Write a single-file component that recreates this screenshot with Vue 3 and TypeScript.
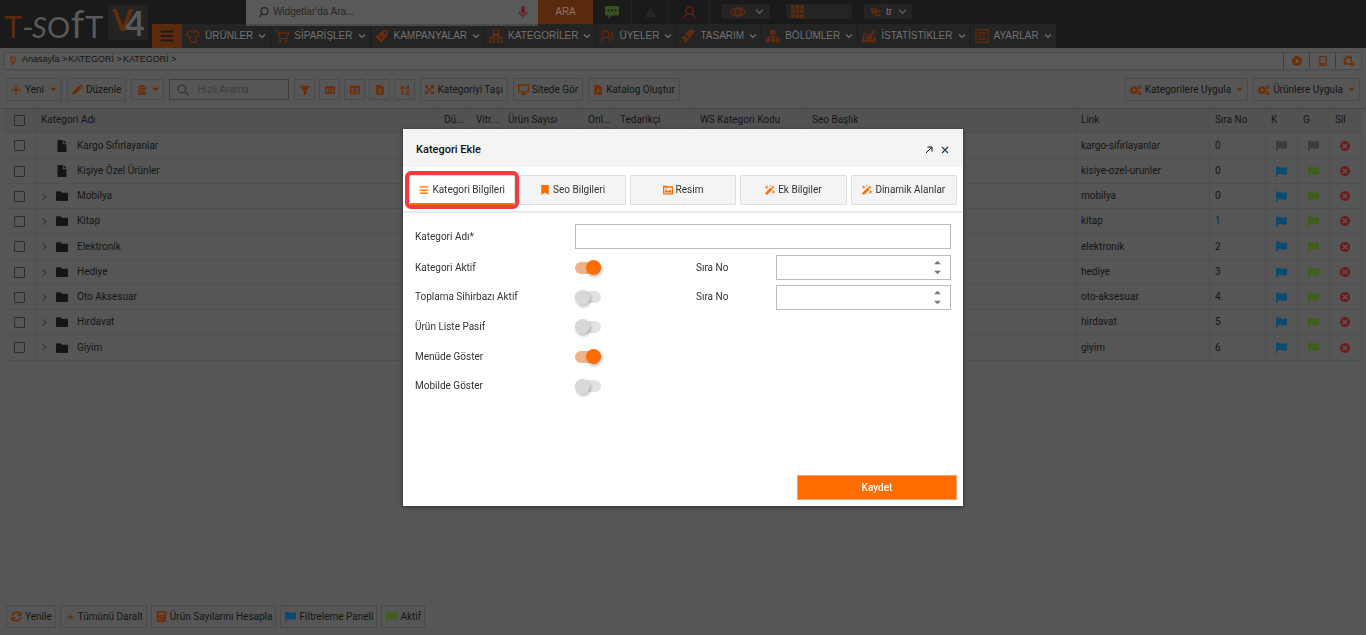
<script setup lang="ts">
import { ref, h, type FunctionalComponent } from 'vue'

interface IconDef { box: number; body: string }

const solid = (d: string, box = 16): IconDef => ({ box, body: `<path fill="currentColor" fill-rule="evenodd" d="${d}"/>` })
const line = (d: string, w = 1.5, box = 16): IconDef => ({ box, body: `<path fill="none" stroke="currentColor" stroke-width="${w}" d="${d}"/>` })

const icons: Record<string, IconDef> = {
  menu: solid('M1 2h14v2H1zM1 7h14v2H1zM1 12h14v2H1z'),
  chevron: line('M2 5l6 6 6-6', 2.4),
  right: line('M4 1l7 7-7 7', 2.4),
  caret: solid('M0 4h16l-8 8z'),
  caretUp: solid('M0 12h16L8 4z'),
  spinUp: solid('M2 11h12L8 5z'),
  spinDown: solid('M2 5h12l-6 6z'),
  search: line('M10.5 10.5L15 15M11.5 6.5a5 5 0 1 1-10 0a5 5 0 1 1 10 0z', 1.6),
  searchLeft: line('M6 10L1.5 14.5M14.5 6a5 5 0 1 1-10 0a5 5 0 1 1 10 0z', 1.8),
  mic: { box: 16, body: '<rect x="5.5" y="0" width="5" height="10" rx="2.5" fill="currentColor"/><path d="M3 7c0 7 10 7 10 0M8 12v4" fill="none" stroke="currentColor" stroke-width="1.5"/>' },
  chat: solid('M0 1h16v11H8l-4 4v-4H0zM3 5v2h2V5zM7 5v2h2V5zM11 5v2h2V5z'),
  warn: solid('M8 1l8 14H0zM7 6v4h2V6zM7 11v2h2v-2z'),
  user: line('M12.2 5.5a4.2 4.7 0 1 1-8.4 0a4.2 4.7 0 1 1 8.4 0zM5.5 9.5C2 11 1.5 13 1.5 15.5M10.5 9.5C14 11 14.500 13 14.500 15.500', 1.6),
  users: line('M10 6a3.700 4.200 0 1 1-7.400 0a3.700 4.200 0 1 1 7.400 0zM4.500 9.500C1.500 10.500 1 12 1 14.500M8.500 9.500c3 1 3.500 2.500 3.500 5M11 3.500c4-1 4.500 4 2 5.500c1.500.5 2 1.500 2 3', 1.3),
  eye: { box: 16, body: '<path d="M.5 8C4 2.500 12 2.500 15.500 8C12 13.500 4 13.500.5 8z" fill="none" stroke="currentColor" stroke-width="1.500"/><circle cx="8" cy="8" r="3.300" fill="none" stroke="currentColor" stroke-width="2"/><circle cx="8" cy="8" r="1" fill="currentColor"/>' },
  grid: solid('M0 0h4.600v4.600H0zM5.700 0h4.600v4.600H5.700zM11.400 0H16v4.600h-4.600zM0 5.700h4.600v4.600H0zM5.700 5.700h4.600v4.600H5.700zM11.400 5.700H16v4.600h-4.600zM0 11.400h4.600V16H0zM5.700 11.400h4.600V16H5.700zM11.400 11.400H16V16h-4.600z'),
  lang: solid('M0 1h9v4h6v10H7v-4H2L0 9zM3 3v2h3V3zM9 8v4h4V8z'),
  shirt: line('M5 2L1 5.500l1.500 3.500L5 8v7h6V8l2.500 1L15 5.500 11 2C10 4 6 4 5 2z', 1.3),
  cart: { box: 16, body: '<path d="M0 2h3l2.500 9h8L15.500 4.500H4" fill="none" stroke="currentColor" stroke-width="1.400"/><circle cx="6" cy="14" r="1.500" fill="currentColor"/><circle cx="13" cy="14" r="1.500" fill="currentColor"/>' },
  tag: solid('M8 2l6-1 1 6-8 8.500L0 9zM11.500 3a1.300 1.300 0 1 0 .1 0zM5 8l3 3 .8-.8-3-3z'),
  boxes: line('M5 1h6v5H5zM1 10h5v5H1zM10 10h5v5h-5zM8 6v2M3.500 10V8h9v2', 1.5),
  brush: solid('M6 4l6-4 4 2-4 6-2 2-5 6-2-4-3-3 5-1zM7 6l-2 3 2 1 2-2z'),
  tree: solid('M5 1h6v5H8.800v2.500H14V11h2v4h-4.500v-4h1V10H8.800v1h1.400v4H5.800v-4h1.400v-1H3.500v1h1v4H0v-4h2V8.500h5.200V6H5z'),
  chart: solid('M1 5h8v1.500H2.500V12h11V7H15v5h1v3H0v-3h1zM4 11V8l2 1 3-2 3-4-1.500-1L15 1v4l-1.500-1-2 3v4z'),
  settings: line('M1 1h14v14H1zM3 4.500h10M3 8h10M3 11.500h10M10 3v3M6 6.500v3M10 10v3', 1.3),
  pin: solid('M8 0a5.500 5.500 0 0 1 5 7.500L8 16 3 7.500A5.500 5.500 0 0 1 8 0zM8 3a2.500 2.500 0 1 0 .1 0z'),
  play: solid('M8 0a8 8 0 1 0 .1 0zM6 4l6 4-6 4z'),
  receipt: solid('M2 0h12v16H2zM4 2v9h8V2zM9 12.500h2v1.500H9z'),
  addGlobe: line('M11 9V3H5L2 6v6h6M5 1v4M10 1v4M1 6h4M1 10h4M12 8v8M8 12h8', 1.8),
  plus: solid('M6.800 1h2.400v5.800H15v2.400H9.200V15H6.800V9.200H1V6.800h5.800z'),
  pencil: solid('M1 11.500L10 2.500l3.500 3.500L4.500 15H1zM11 1.500l1.500-1.500L16 3.500 14.500 5z'),
  trash: solid('M1 1.500h4L6 0h4l1 1.500h4V3H1zM2 4h12v12H2zM4 6v8h1.200V6zM7.400 6v8h1.200V6zM10.800 6v8H12V6z'),
  filter: solid('M0 1h16v1.500L10 9v7H6V9L0 2.500z'),
  abc: solid('M0 2h16v12H0zM2 5v6h1V9h1v2h1V5zM3 6h1v2H3zM7 5v6h2V8H8V7h1V5zM11 5v6h3V9.500h-1.500v-3H14V5z'),
  table: solid('M0 1h16v14H0zM2 5v2h5V5zM9 5v2h5V5zM2 8.500v2h5v-2zM9 8.500v2h5v-2zM2 12v1.500h5V12zM9 12v1.500h5V12z'),
  excel: solid('M2 0h8l4 4v12H2zM5 6l2 3.500L5 13h2l1-2 1 2h2L9 9.500 11 6H9L8 8 7 6z'),
  sort: { box: 16, body: '<path d="M4 15V3M1 6l3-4 3 4M10 7l2.500-6L15 7M11 5h3M10 10h4.500L10 15h5" fill="none" stroke="currentColor" stroke-width="1.800"/>' },
  move: line('M1 1l14 14M15 1L1 15M1 6V1h5M10 1h5v5M15 10v5h-5M6 15H1v-5', 2.2),
  monitor: line('M1 1.500h14v10H1zM8 11v4M4.500 14.500h7', 2),
  pdf: solid('M2 0h8l4 4v12H2zM7.500 5c.5 4-1.500 5-3.500 8l1 .5C6.500 11 9 10 12 11v-1.500C9.500 9.500 9 7 8.800 5z'),
  gears: { box: 16, body: '<circle cx="5.500" cy="8" r="3.300" fill="none" stroke="currentColor" stroke-width="2.600"/><circle cx="5.500" cy="8" r="5" fill="none" stroke="currentColor" stroke-width="1.600" stroke-dasharray="2 1.930"/><circle cx="13" cy="4" r="1.700" fill="none" stroke="currentColor" stroke-width="1.600"/><circle cx="13" cy="12" r="1.700" fill="none" stroke="currentColor" stroke-width="1.600"/>' },
  file: solid('M2 0h7v5.500h5V16H2zM10.200 0L14 4.200h-3.800z'),
  folder: solid('M0 3a1.500 1.500 0 0 1 1.500-1.500H6L8 3.500h6.500A1.500 1.500 0 0 1 16 5v8a1.500 1.500 0 0 1-1.500 1.500h-13A1.500 1.500 0 0 1 0 13z'),
  flag: solid('M0 0h2v2C5 .5 7 3 10 2.500c2 0 4-.5 6-1v10c-4 2-6 1-8 .5-2-.5-4-.5-6 .5v4H0z'),
  remove: solid('M8 0a8 8 0 1 0 .1 0zM5.200 3.500L8 6.300l2.800-2.800 1.700 1.700L9.700 8l2.800 2.800-1.700 1.700L8 9.700l-2.800 2.800-1.700-1.700L6.300 8 3.500 5.200z'),
  refresh: line('M2 7c1-6 9-7 12-2M14.500 1v5h-5M14 9c-1 6-9 7-12 2M1.500 15v-5h5', 2.2),
  calc: solid('M1 0h14v16H1zM3.500 2v3.500h9V2zM3.500 7.500v2h2v-2zM7 7.500v2h2v-2zM10.500 7.500v2h2v-2zM3.500 11.500v2h2v-2zM7 11.500v2h2v-2zM10.500 11.500v2h2v-2z'),
  bookmark: solid('M2 0h12v16l-6-4-6 4z'),
  image: solid('M0 1h6l1 1h9v13H0zM2 4.500v8.500h12V4.500zM3 12V9l2-1 3 2 3-3 2 2v3zM4 5.500h2v2H4z'),
  wand: solid('M0 13L9 4l3 3-9 9zM10 3l2-2 3 3-2 2zM2 1h1.500v1.500H5V4H3.500v1.500H2V4H.5V2.500H2zM7 0h1.500v2H7zM13 9h1.500v1.500H16V12h-1.500v1.500H13V12h-1.500v-1.500H13z'),
  expand: line('M2 14L13.500 2.500M5 2h9v9', 2),
  close: line('M2 2l12 12M14 2L2 14', 2.2),
}

const Icon: FunctionalComponent<{ name: string; size?: number }> = (props) => {
  const icon = icons[props.name]
  const size = props.size ?? 12
  return h('svg', {
    width: size,
    height: size,
    viewBox: `0 0 ${icon.box} ${icon.box}`,
    'aria-hidden': 'true',
    innerHTML: icon.body,
  })
}
Icon.props = { name: String, size: Number }

const navItems = [
  { label: 'ÜRÜNLER', icon: 'shirt' },
  { label: 'SİPARİŞLER', icon: 'cart' },
  { label: 'KAMPANYALAR', icon: 'tag' },
  { label: 'KATEGORİLER', icon: 'boxes' },
  { label: 'ÜYELER', icon: 'users' },
  { label: 'TASARIM', icon: 'brush' },
  { label: 'BÖLÜMLER', icon: 'tree' },
  { label: 'İSTATİSTİKLER', icon: 'chart' },
  { label: 'AYARLAR', icon: 'settings' },
]

const crumbs = ['Anasayfa', 'KATEGORİ', 'KATEGORİ']

const squareTools = [
  { icon: 'filter', label: 'Filtre' },
  { icon: 'abc', label: 'Metin' },
  { icon: 'table', label: 'Tablo' },
  { icon: 'excel', label: 'Excel' },
  { icon: 'sort', label: 'Sırala' },
]

const columns = ['Kategori Adı', 'Dü...', 'Vitr...', 'Ürün Sayısı', 'Onl...', 'Tedarikçi', 'WS Kategori Kodu', 'Seo Başlık', 'Link', 'Sıra No', 'K', 'G', 'Sil']

interface Category { name: string; link: string; order: number; folder: boolean; active: boolean; marked?: boolean }

const categories: Category[] = [
  { name: 'Kargo Sıfırlayanlar', link: 'kargo-sifirlayanlar', order: 0, folder: false, active: false },
  { name: 'Kişiye Özel Ürünler', link: 'kisiye-ozel-urunler', order: 0, folder: false, active: true },
  { name: 'Mobilya', link: 'mobilya', order: 0, folder: true, active: true },
  { name: 'Kitap', link: 'kitap', order: 1, folder: true, active: true, marked: true },
  { name: 'Elektronik', link: 'elektronik', order: 2, folder: true, active: true },
  { name: 'Hediye', link: 'hediye', order: 3, folder: true, active: true },
  { name: 'Oto Aksesuar', link: 'oto-aksesuar', order: 4, folder: true, active: true },
  { name: 'Hırdavat', link: 'hirdavat', order: 5, folder: true, active: true },
  { name: 'Giyim', link: 'giyim', order: 6, folder: true, active: true },
]

const footerTools = [
  { label: 'Yenile', icon: 'refresh', tone: '' },
  { label: 'Tümünü Daralt', icon: 'caretUp', tone: 'collapse' },
  { label: 'Ürün Sayılarını Hesapla', icon: 'calc', tone: '' },
  { label: 'Filtreleme Paneli', icon: 'flag', tone: 'blue' },
  { label: 'Aktif', icon: 'flag', tone: 'green' },
]

const tabs = [
  { label: 'Kategori Bilgileri', icon: 'menu' },
  { label: 'Seo Bilgileri', icon: 'bookmark' },
  { label: 'Resim', icon: 'image' },
  { label: 'Ek Bilgiler', icon: 'wand' },
  { label: 'Dinamik Alanlar', icon: 'wand' },
]
const activeTab = ref(0)

const toggles = ref([
  { id: 'active', label: 'Kategori Aktif', on: true, order: true },
  { id: 'wizard', label: 'Toplama Sihirbazı Aktif', on: false, order: true },
  { id: 'passive', label: 'Ürün Liste Pasif', on: false, order: false },
  { id: 'menu', label: 'Menüde Göster', on: true, order: false },
  { id: 'mobile', label: 'Mobilde Göster', on: false, order: false },
])
</script>

<template>
  <div class="page">
    <header class="header">
      <a class="logo" href="#" aria-label="T-SOFT V4">
        <svg width="152" height="48" viewBox="0 0 152 48">
          <g class="wordmark">
            <text x="4" y="38" font-size="31" class="accent">T</text>
            <text x="22" y="38" font-size="31">-</text>
            <text x="32" y="38" font-size="29" font-style="italic">S</text>
            <text x="47" y="38" font-size="29">O</text>
            <text x="71" y="38" font-size="38">f</text>
            <text x="85" y="38" font-size="31">T</text>
          </g>
          <rect x="108" y="5" width="40" height="35" rx="3" fill="#232323" />
          <g class="version">
            <text x="112" y="31" font-size="30" class="accent">V</text>
            <text x="125" y="36" font-size="34">4</text>
          </g>
        </svg>
      </a>
      <div class="header-main">
        <div class="top-row">
          <label class="widget-search">
            <Icon name="searchLeft" :size="11" />
            <input type="text" placeholder="Widgetlar'da Ara..." aria-label="Widgetlar'da Ara" />
            <Icon class="mic" name="mic" :size="12" />
          </label>
          <button class="ara" type="button">ARA</button>
          <button class="top-cell chat" type="button" aria-label="Mesajlar"><Icon name="chat" :size="14" /></button>
          <button class="top-cell warn" type="button" aria-label="Uyarılar"><Icon name="warn" :size="11" /></button>
          <button class="top-cell user" type="button" aria-label="Hesap"><Icon name="user" :size="13" /></button>
          <button class="pill first" type="button" aria-label="Görünüm"><Icon name="eye" :size="16" /><Icon class="chev" name="chevron" :size="9" /></button>
          <button class="pill apps" type="button" aria-label="Uygulamalar"><Icon name="grid" :size="13" /></button>
          <button class="pill lang" type="button"><Icon name="lang" :size="10" /><span>tr</span><Icon class="chev" name="chevron" :size="9" /></button>
        </div>
        <nav class="nav">
          <button class="burger" type="button" aria-label="Menü"><Icon name="menu" :size="14" /></button>
          <a v-for="item in navItems" :key="item.label" href="#">
            <Icon class="nav-icon" :name="item.icon" :size="14" />
            <span>{{ item.label }}</span>
            <Icon name="chevron" :size="8" />
          </a>
        </nav>
      </div>
    </header>

    <div class="breadcrumb">
      <Icon class="accent-icon" name="pin" :size="10" />
      <nav class="crumbs"><a v-for="(c, i) in crumbs" :key="i" href="#">{{ c }} &gt;</a></nav>
      <div class="crumb-actions">
        <button type="button" aria-label="Video"><Icon name="play" :size="10" /></button>
        <button type="button" aria-label="Notlar"><Icon name="receipt" :size="10" /></button>
        <button type="button" aria-label="Ekle"><Icon name="addGlobe" :size="12" /></button>
      </div>
    </div>

    <div class="toolbar">
      <button class="tool new" type="button"><Icon name="plus" :size="10" />Yeni<Icon class="drop" name="caret" :size="7" /></button>
      <button class="tool" type="button"><Icon name="pencil" :size="11" />Düzenle</button>
      <button class="tool small" type="button" aria-label="Sil"><Icon name="trash" :size="10" /><Icon name="caret" :size="7" /></button>
      <label class="quick-search">
        <Icon name="search" :size="12" />
        <input type="text" placeholder="Hızlı Arama" aria-label="Hızlı Arama" />
      </label>
      <div class="squares">
        <button v-for="t in squareTools" :key="t.icon" class="tool square" type="button" :aria-label="t.label"><Icon :name="t.icon" :size="10" /></button>
      </div>
      <button class="tool" type="button"><Icon name="move" :size="9" />Kategoriyi Taşı</button>
      <button class="tool" type="button"><Icon name="monitor" :size="11" />Sitede Gör</button>
      <button class="tool" type="button"><Icon name="pdf" :size="10" />Katalog Oluştur</button>
      <span class="spacer"></span>
      <button class="tool" type="button"><Icon name="gears" :size="12" />Kategorilere Uygula<Icon class="drop" name="caret" :size="7" /></button>
      <button class="tool" type="button"><Icon name="gears" :size="12" />Ürünlere Uygula<Icon class="drop" name="caret" :size="7" /></button>
    </div>

    <main class="content">
      <table>
        <colgroup>
          <col class="w-check" /><col /><col class="w-s" /><col class="w-s" /><col class="w-m" /><col class="w-s" /><col class="w-m" />
          <col class="w-ws" /><col class="w-seo" /><col class="w-link" /><col class="w-order" /><col class="w-s" /><col class="w-s" /><col class="w-s" />
        </colgroup>
        <thead>
          <tr>
            <th><input type="checkbox" aria-label="Tümünü seç" /></th>
            <th v-for="c in columns" :key="c">{{ c }}</th>
          </tr>
        </thead>
        <tbody>
          <tr v-for="row in categories" :key="row.link">
            <td><input type="checkbox" :aria-label="row.name" /></td>
            <td>
              <div class="name">
                <span class="twist"><Icon v-if="row.folder" name="right" :size="7" /></span>
                <Icon class="kind" :name="row.folder ? 'folder' : 'file'" :size="12" />
                <span>{{ row.name }}</span>
              </div>
            </td>
            <td v-for="n in 7" :key="n" class="blank"></td>
            <td>{{ row.link }}</td>
            <td :class="{ marked: row.marked }">{{ row.order }}</td>
            <td class="mark" :class="row.active ? 'blue' : 'grey'"><Icon name="flag" :size="11" /></td>
            <td class="mark" :class="row.active ? 'green' : 'grey'"><Icon name="flag" :size="11" /></td>
            <td class="mark red"><Icon name="remove" :size="10" /></td>
          </tr>
        </tbody>
      </table>
    </main>

    <footer class="footer">
      <button v-for="f in footerTools" :key="f.label" class="tool" :class="f.tone" type="button"><Icon :name="f.icon" :size="f.icon === 'caretUp' ? 7 : 11" />{{ f.label }}</button>
    </footer>

    <div class="backdrop">
      <section class="dialog" role="dialog" aria-labelledby="dialog-title">
        <header class="dialog-head">
          <h2 id="dialog-title">Kategori Ekle</h2>
          <button type="button" aria-label="Büyüt"><Icon class="grow" name="expand" :size="8" /></button>
          <button type="button" aria-label="Kapat"><Icon name="close" :size="8" /></button>
        </header>
        <div class="tabs" role="tablist">
          <button
            v-for="(tab, i) in tabs"
            :key="tab.label"
            type="button"
            role="tab"
            :aria-selected="activeTab === i"
            :class="{ active: activeTab === i }"
            @click="activeTab = i"
          >
            <Icon :name="tab.icon" :size="10" />{{ tab.label }}
          </button>
        </div>
        <form class="form" @submit.prevent>
          <div class="row-name">
            <label for="category-name">Kategori Adı*</label>
            <input id="category-name" class="field" type="text" />
          </div>
          <div class="toggle-rows">
            <div v-for="t in toggles" :key="t.id" class="toggle-row">
              <label :for="t.id">{{ t.label }}</label>
              <input :id="t.id" v-model="t.on" class="switch" type="checkbox" role="switch" />
              <template v-if="t.order">
                <label :for="t.id + '-order'">Sıra No</label>
                <div class="spin">
                  <input :id="t.id + '-order'" class="field" type="text" inputmode="numeric" />
                  <span class="spin-arrows"><Icon name="spinUp" :size="9" /><Icon name="spinDown" :size="9" /></span>
                </div>
              </template>
            </div>
          </div>
          <button class="save" type="submit">Kaydet</button>
        </form>
      </section>
    </div>
  </div>
</template>

<style>
body { margin: 0; background: #565656; }
</style>

<style scoped>
* { box-sizing: border-box; }
button { font: inherit; color: inherit; background: none; border: 0; padding: 0; margin: 0; cursor: pointer; }
input { font: inherit; margin: 0; }
a { text-decoration: none; color: inherit; }
svg { flex: none; display: block; }

.page {
  min-height: 100vh;
  display: flex;
  flex-direction: column;
  background: #565656;
  color: #151515;
  font: 10px/14px Roboto, "Noto Sans", sans-serif;
}

.header { display: flex; background: #1a1a1a; height: 48px; font-family: "Liberation Sans", Arial, sans-serif; }
.logo { width: 152px; }
.wordmark { font-family: Lato, sans-serif; font-weight: 400; fill: #595959; }
.version { font-family: Lato, sans-serif; font-weight: 700; fill: #595959; }
.accent { fill: #5c2b0e; }
.version .accent { fill: #642c0c; }
.header-main { flex: 1; min-width: 0; }
.top-row { height: 24px; display: flex; align-items: flex-start; padding-left: 94px; }
.widget-search {
  width: 292px; height: 26px; position: relative; z-index: 1;
  display: flex; align-items: center; gap: 4px; padding: 0 9px 0 12px;
  background: #595959; border-bottom: 2px solid #494949; color: #242424;
}
.widget-search input { flex: 1; min-width: 0; border: 0; background: none; outline: 0; padding: 0; font-size: 10px; }
.widget-search input::placeholder { color: #262626; opacity: 1; }
.mic { color: #671c28; }
.ara { width: 55px; height: 24px; background: #5a2a0e; color: #8a7468; font-size: 10px; }
.top-cell { height: 24px; display: grid; place-items: center; border-right: 1px solid #242424; }
.chat { width: 39px; color: #3a4f1d; }
.warn { width: 37px; color: #272727; }
.user { width: 41px; color: #622810; }
.pill { height: 15px; margin: 4px 0 0 12px; border-radius: 2px; background: #242424; color: #5e2a0e; display: flex; align-items: center; }
.first { width: 48px; justify-content: space-between; padding: 0 6px 0 8px; }
.apps { width: 66px; margin-left: 16px; padding-left: 5px; }
.lang { width: 48px; gap: 5px; padding: 0 5px 0 7px; }
.lang span { color: #777; font-size: 10px; }
.chev { color: #5e5e5e; }
.lang .chev { margin-left: auto; }

.nav { height: 24px; display: flex; }
.burger { width: 30px; background: #5a2a0e; color: #1a1a1a; display: grid; place-items: center; }
.nav a {
  display: flex; align-items: center; gap: 5px; padding: 0 4px;
  background: #242424; border-right: 1px solid #1a1a1a; color: #727272; font-size: 10px; white-space: nowrap;
}
.nav-icon { color: #642c0e; }

.breadcrumb {
  margin: 4px 4px 0; height: 18px; display: flex; align-items: center; gap: 4px; padding-left: 3px;
  border: 1px solid #4a4a4a; background: #595959;
  font-family: "Liberation Sans", Arial, sans-serif; white-space: nowrap;
}
.crumbs { display: flex; gap: 1px; font-size: 9px; line-height: 12px; margin-bottom: 4px; }
.accent-icon { color: #70381a; }
.crumb-actions { margin-left: auto; display: flex; align-self: stretch; color: #6e2f07; }
.crumb-actions button { width: 26px; display: grid; place-items: center; border-left: 1px solid #3c3c3c; }

.toolbar { display: flex; align-items: center; gap: 5px; padding: 8px 6px 7px; }
.spacer { flex: 1; }
.tool {
  height: 23px; padding: 0 4px; display: flex; align-items: center; gap: 3px;
  border: 1px solid #4a4a4a; border-radius: 1px; white-space: nowrap; color: #151515;
}
.tool svg { color: #6e2c04; }
.tool .drop { margin-left: 2px; }
.new { gap: 4px; }
.small { height: 21px; padding: 0 4px 0 5px; gap: 5px; }
.squares { display: flex; gap: 4px; }
.square { width: 21px; height: 21px; justify-content: center; padding: 0; }
.quick-search { width: 120px; height: 21px; display: flex; align-items: center; gap: 8px; padding: 0 7px; border: 1px solid #3c3c3c; color: #333; }
.quick-search input { flex: 1; min-width: 0; border: 0; background: none; outline: 0; padding: 0; }
.quick-search input::placeholder { color: #3c3c3c; opacity: 1; }

.content { flex: 1; padding: 0 4px; border-top: 1px solid #454545; }
table { width: 100%; border-collapse: separate; border-spacing: 0; table-layout: fixed; }
.w-check { width: 32px; } .w-s { width: 32px; } .w-m { width: 80px; } .w-ws { width: 112px; } .w-seo { width: 269px; }
.w-link { width: 134px; } .w-order { width: 56px; }
th, td {
  height: 25px; padding: 0 2px 0 5px; text-align: left; font-weight: 400;
  border-bottom: 1px solid #4f4f4f; border-right: 1px solid #4f4f4f;
  overflow: hidden; text-overflow: ellipsis; white-space: nowrap;
}
th { height: 24px; padding-bottom: 2px; background: #525252; }
td.blank, td:nth-child(2) { border-right-color: transparent; }
td.blank:nth-child(9) { border-right-color: #4f4f4f; }
tbody tr:nth-child(4n + 1) td { height: 26px; }
th:first-child, td:first-child { padding: 0 0 0 10px; }
table input {
  appearance: none; display: block; width: 11px; height: 11px; border: 1px solid #2c2c2c; border-radius: 1px;
}
.name { display: flex; align-items: center; }
.twist { width: 15px; color: #333; }
.kind { margin-right: 9px; color: #151515; }
.mark svg { margin-left: 5px; }
.mark { color: #3c3c3c; }
.marked { color: #0b3350; }
.tool.blue svg, .mark.blue { color: #0c4b70; }
.tool.green svg, .mark.green { color: #3f5d1b; }
.mark.red { color: #6e1a1a; }

.footer { display: flex; gap: 4px; padding: 0 6px 7px; }
.footer .tool { padding-right: 3px; }
.footer .collapse { gap: 4px; padding-left: 6px; }

.backdrop { position: fixed; inset: 0; display: grid; place-items: center; }
.dialog { width: 560px; background: #fff; color: #333; box-shadow: 0 1px 4px rgba(0, 0, 0, 0.5); font-size: 10px; }
.dialog-head { height: 38px; display: flex; align-items: center; gap: 8px; padding: 3px 14px 0 13px; background: #f4f4f4; color: #173f52; }
.dialog-head h2 { flex: 1; margin: 0; font-size: 11px; font-weight: 500; color: #111; }
.grow { color: #111; }
.tabs { display: flex; gap: 4px; padding: 8px 6px 6px; border-bottom: 2px solid #eaeaea; }
.tabs button {
  flex: 1 1 0; height: 30px; display: flex; align-items: center; justify-content: center; gap: 3px; white-space: nowrap;
  border: 1px solid #dedede; border-radius: 1px; background: #f4f4f4; color: #333; font-size: 10px;
}
.tabs svg { color: #ff6c00; }
.tabs .active { background: #fff; border-bottom: 2px solid #ff6c00; outline: 4px solid #f33b3b; border-radius: 2px; }
.form { padding: 11px 6px 6px 12px; display: flex; flex-direction: column; }
.row-name, .toggle-row { display: grid; grid-template-columns: 160px 121px 80px 1fr; align-items: center; padding-right: 6px; }
.row-name .field { grid-column: 2 / -1; }
.toggle-rows { display: grid; grid-template-rows: repeat(5, 1fr); min-height: 148px; margin-top: 4px; }
.field { width: 100%; height: 25px; border: 1px solid #bdbdbd; border-radius: 0; background: #fff; padding: 0 6px; outline: 0; }
.spin { display: flex; align-items: center; position: relative; }
.spin-arrows { position: absolute; right: 9px; display: grid; gap: 1px; color: #777; }
.switch {
  appearance: none; width: 26px; height: 12px; border-radius: 6px; background: #e2e2e2; display: flex; align-items: center; cursor: pointer;
}
.switch::before { content: ""; width: 15px; height: 15px; flex: none; border-radius: 50%; background: #d8d8d8; box-shadow: 1px 2px 3px rgba(0, 0, 0, 0.25); }
.switch:checked { background: #ecb48e; justify-content: flex-end; }
.switch:checked::before { background: #ff6c00; }
.save { align-self: flex-end; width: 160px; height: 25px; margin-top: 74px; background: #ff6c00; border: 1px solid #eda679; color: #fff; font-weight: 500; }
</style>
